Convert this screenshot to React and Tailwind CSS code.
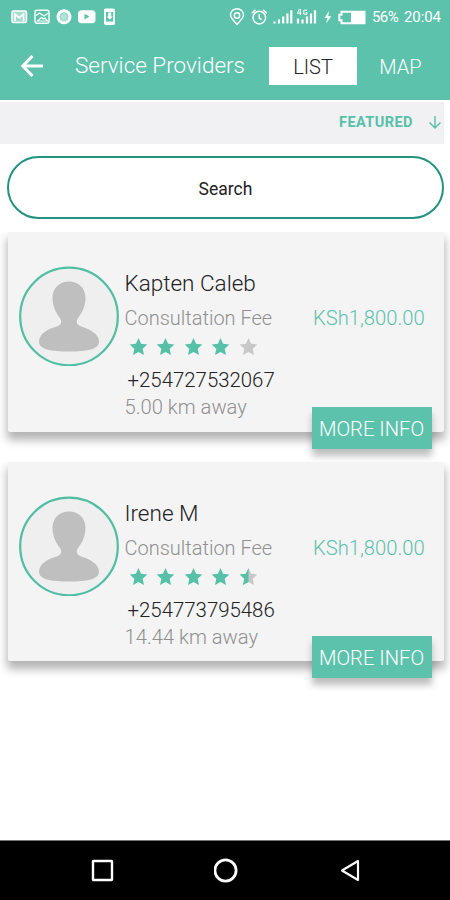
import React from 'react';

const providers = [
  { id: 1, name: 'Kapten Caleb', fee: 'KSh1,800.00', rating: 4, phone: '+254727532067', distance: '5.00 km away' },
  { id: 2, name: 'Irene M', fee: 'KSh1,800.00', rating: 4.5, phone: '+254773795486', distance: '14.44 km away' },
];

const StatusBar = () => (
  <div className="flex h-[34px] items-center justify-between pl-[11px] pr-[9px] text-white">
    <svg width="106" height="18" viewBox="0 0 106 18" fill="none">
      <rect x="1" y="3" width="14.5" height="11.5" rx="1.5" fill="#a6dccf" stroke="currentColor" strokeWidth="1.5" />
      <path d="M4 13V6l4.2 3.6L12.500 6v7" stroke="currentColor" strokeWidth="1.7" />
      <rect x="24" y="2.200" width="14" height="13" rx="2" stroke="currentColor" strokeWidth="1.4" />
      <path d="M25 7.500l3.500-2.500 4.500 3 4.500-3M26.500 13l4-3.500 2 1.500 1.500-1 2.500 3z" stroke="currentColor" strokeWidth="1.2" />
      <circle cx="53" cy="8.800" r="7.500" fill="currentColor" />
      <circle cx="53" cy="8.800" r="4" fill="#b5e2d7" stroke="#8ed3c2" strokeWidth="1" />
      <rect x="67" y="2.300" width="17.500" height="13" rx="3.500" fill="currentColor" />
      <path d="M73.500 5.800v5.600l5-2.800z" fill="#5dc2ab" />
      <rect x="93" y="0.500" width="11" height="16.500" rx="1.800" fill="currentColor" />
      <rect x="95" y="4" width="7.200" height="9.500" fill="#5dc2ab" />
      <path d="M97.200 4.500v4h-1.500l3 3.200 3-3.200h-1.500v-4z" fill="currentColor" />
    </svg>
    <div className="flex items-center">
      <svg width="138" height="20" viewBox="0 0 138 20" fill="none" stroke="currentColor">
        <path d="M9 17.500C6 14 2.500 11 2.500 8a6.500 6.200 0 0 1 13 0c0 3-3.500 6-6.500 9.500z" strokeWidth="1.4" />
        <circle cx="9" cy="8.500" r="2.700" strokeWidth="1.400" />
        <circle cx="31.300" cy="10.600" r="6.300" strokeWidth="1.500" />
        <path d="M31.300 7v4l2.300 1.600M23.800 6.200l3.700-3.400M38.800 6.200l-3.700-3.400" strokeWidth="1.500" />
        <g strokeWidth="2.200">
          <path d="M46.500 16.500v-2M51 16.500v-4M55.200 16.500V9.500M59.400 16.500V6.500M63.300 16.500V3.200" />
          <path d="M70 16.500v-5M74.500 16.500v-4M79 16.500V9.500M83 16.500V6.500M87 16.500V3.200" />
        </g>
        <path d="M71.300 2l-1.800 4.200h4M72.300 2v6M79 3.200h-3.200v4H79V5.500h-1.300" strokeWidth="1" />
        <path d="M101 4l-4.500 7h3l-1.500 5.500 5.200-7.300h-3z" fill="currentColor" stroke="none" />
        <path d="M113.500 4.700h23v11.600h-23v-3h-2.200V7.700h2.200z" strokeWidth="2" />
        <rect x="123" y="4" width="14" height="13" fill="currentColor" stroke="none" />
      </svg>
      <span className="ml-[6px] w-[28px] text-[15px] leading-5 tracking-[-0.6px]">56%</span>
      <span className="ml-[4px] w-[37px] text-[15px] leading-5 tracking-[-0.1px]">20:04</span>
    </div>
  </div>
);

const Header = () => (
  <header className="h-[100px] bg-[#5dc2ab] text-white">
    <StatusBar />
    <div className="flex h-[64px] items-center pl-[20px]">
      <svg width="24" height="24" viewBox="0 0 24 24" fill="none" stroke="currentColor" strokeWidth="3">
        <path d="M12.500 2L2.800 12l9.700 10M2.500 12H23" />
      </svg>
      <h1 className="ml-[31px] w-[194px] whitespace-nowrap text-[22.500px] font-light">Service Providers</h1>
      <button className="h-[38px] w-[88px] bg-white pt-[2px] text-[20px] font-light text-[#222]">LIST</button>
      <button className="h-[38px] w-[87px] pt-[2px] text-[20px] font-light">MAP</button>
    </div>
  </header>
);

const Star = ({ fill }) => (
  <svg width="27.500" height="20" viewBox="0 0 27.500 20">
    <path d="M13.500 1l2.600 5.800 6.200.7-4.600 4.300 1.300 6.200-5.500-3.100L8 18l1.300-6.200-4.600-4.300 6.200-.7z" fill={fill === 1 ? '#56c1a7' : '#c8c8c8'} />
    {fill > 0 && fill < 1 && (
      <path d="M13.500 1v13.900L8 18l1.300-6.200-4.600-4.300 6.200-.7z" fill="#56c1a7" />
    )}
  </svg>
);

const Avatar = () => (
  <svg className="shrink-0" width="100" height="100" viewBox="0 0 100 100">
    <circle cx="50" cy="50.500" r="48.800" fill="#efefef" stroke="#50bea2" strokeWidth="2.200" />
    <path
      d="M50 15.500c10 0 16.500 7 16.500 16.500 0 9-4 15.500-7.500 20-2 3.500-1.500 6.500 2 8 9 3 19 7.500 19 15.500 0 8-12 10-30 10s-30-2-30-10c0-8 9-12.500 19-15.500 3.500-1.500 4-4.500 2-8C37.500 47.500 33.500 41 33.500 32c0-9.500 6.500-16.500 16.500-16.500z"
      fill="#bfbfbf"
    />
  </svg>
);

const ProviderCard = ({ provider }) => (
  <li className="h-[229.500px] overflow-hidden pl-[7.500px] pr-[6px]">
    <div className="relative flex h-[199.500px] rounded-b-[2px] bg-[#f4f4f4] pl-[11.500px] pt-[34px] shadow-[0_7px_10px_1px_rgba(0,0,0,0.3)]">
      <Avatar />
      <div className="ml-[5.500px] w-[170px] whitespace-nowrap font-light">
        <h3 className="h-[34px] text-[22.500px] leading-[35px] text-[#222]">{provider.name}</h3>
        <p className="h-[35px] text-[20px] leading-[36px] text-[#909090]">Consultation Fee</p>
        <div className="flex h-[24px] items-center">
          {[0, 1, 2, 3, 4].map((i) => (
            <Star key={i} fill={Math.max(0, Math.min(1, provider.rating - i))} />
          ))}
        </div>
        <p className="mt-[6px] h-[29px] pl-[3px] text-[20.400px] leading-[31px] text-[#222]">{provider.phone}</p>
        <p className="h-[26px] text-[20.200px] leading-[26px] text-[#909090]">{provider.distance}</p>
      </div>
      <p className="ml-[18.500px] mt-[34px] h-[36px] text-[20.200px] font-light leading-[36px] text-[#5dc2ab]">{provider.fee}</p>
      <button className="absolute right-[12.500px] top-[174.500px] h-[42px] w-[120px] whitespace-nowrap bg-[#5dc2ab] pt-[3px] text-[20.200px] font-light text-white shadow-[0_7px_7px_rgba(0,0,0,0.26)]">
        MORE INFO
      </button>
    </div>
  </li>
);

const NavBar = () => (
  <nav className="flex h-[60px] items-center justify-between border-t border-[#777] bg-black pl-[91px] pr-[89px] text-white">
    <svg width="24" height="24" viewBox="0 0 24 24" fill="none" stroke="currentColor" strokeWidth="2.400">
      <rect x="2" y="2" width="19" height="19" rx="0.500" />
    </svg>
    <svg width="26" height="26" viewBox="0 0 26 26" fill="none" stroke="currentColor" strokeWidth="2.800">
      <circle cx="11.500" cy="12.500" r="10.600" />
    </svg>
    <svg width="22" height="24" viewBox="0 0 22 24" fill="none" stroke="currentColor" strokeWidth="2.200" strokeLinejoin="round">
      <path d="M19 2v19L3 11.500z" />
    </svg>
  </nav>
);

const App = () => (
  <div className="flex h-[900px] w-[450px] flex-col overflow-hidden bg-white font-['Roboto',sans-serif]">
    <Header />
    <div className="mt-[2px] flex h-[42px] w-[444px] items-center justify-end bg-[#f1f1f4] pr-[2px] text-[#56c1a7]">
      <span className="text-[14.500px] font-bold tracking-[0.450px]">FEATURED</span>
      <svg className="ml-[15px]" width="14" height="16" viewBox="0 0 14 16" fill="none" stroke="currentColor" strokeWidth="1.400">
        <path d="M7 1v12M1.500 7.500L7 13l5.500-5.500" />
      </svg>
    </div>
    <input
      type="text"
      placeholder="Search"
      className="ml-[7px] mt-[12px] h-[63px] w-[437px] shrink-0 rounded-full border-[2.500px] border-[#23937f] pt-[2px] text-center text-[17.500px] text-black placeholder:text-[#222]"
    />
    <ul className="mt-[13px]">
      {providers.map((provider) => (
        <ProviderCard key={provider.id} provider={provider} />
      ))}
    </ul>
    <div className="flex-1" />
    <NavBar />
  </div>
);

export default App;
